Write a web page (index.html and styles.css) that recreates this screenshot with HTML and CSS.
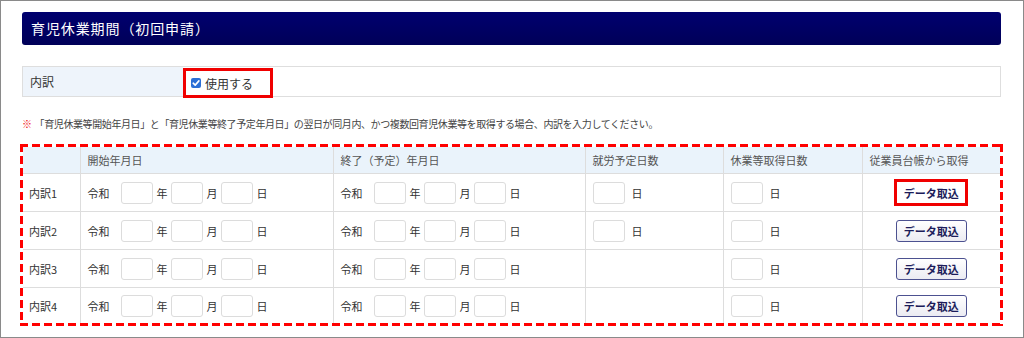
FILE: index.html
```html
<!DOCTYPE html>
<html lang="ja">
<head>
    <meta charset="UTF-8">
    <title>育児休業期間（初回申請）</title>
    <link rel="stylesheet" href="styles.css">
</head>
<body>
    <div class="frame">
        <div class="section-title">育児休業期間（初回申請）</div>

        <div class="use-row">
            <div class="use-label">内訳</div>
            <div class="use-value">
                <label class="use-mark">
                    <span class="check">
                        <svg width="10" height="10" viewBox="0 0 10 10"><path d="M2.2 5.2 L4.2 7.1 L7.9 2.9" fill="none" stroke="#fff" stroke-width="1.6" stroke-linecap="round" stroke-linejoin="round"/></svg>
                    </span>
                    使用する
                </label>
            </div>
        </div>

        <p class="note"><span class="note-mark">※</span>「育児休業等開始年月日」と「育児休業等終了予定年月日」の翌日が同月内、かつ複数回育児休業等を取得する場合、内訳を入力してください。</p>

        <div class="dashed">
            <table class="detail">
                <colgroup>
                    <col class="c-name">
                    <col class="c-date">
                    <col class="c-date2">
                    <col class="c-days">
                    <col class="c-days2">
                    <col class="c-btn">
                </colgroup>
                <thead>
                    <tr>
                        <th></th>
                        <th>開始年月日</th>
                        <th>終了（予定）年月日</th>
                        <th>就労予定日数</th>
                        <th>休業等取得日数</th>
                        <th>従業員台帳から取得</th>
                    </tr>
                </thead>
                <tbody>
                    <tr>
                        <td>内訳1</td>
                        <td><div class="date"><span class="era">令和</span><span class="box"></span><span class="unit">年</span><span class="box"></span><span class="unit">月</span><span class="box"></span><span class="unit">日</span></div></td>
                        <td><div class="date"><span class="era">令和</span><span class="box"></span><span class="unit">年</span><span class="box"></span><span class="unit">月</span><span class="box"></span><span class="unit">日</span></div></td>
                        <td><div class="days"><span class="box"></span><span class="unit">日</span></div></td>
                        <td><div class="days"><span class="box"></span><span class="unit">日</span></div></td>
                        <td class="btn-cell"><button class="fetch marked">データ取込</button></td>
                    </tr>
                    <tr>
                        <td>内訳2</td>
                        <td><div class="date"><span class="era">令和</span><span class="box"></span><span class="unit">年</span><span class="box"></span><span class="unit">月</span><span class="box"></span><span class="unit">日</span></div></td>
                        <td><div class="date"><span class="era">令和</span><span class="box"></span><span class="unit">年</span><span class="box"></span><span class="unit">月</span><span class="box"></span><span class="unit">日</span></div></td>
                        <td><div class="days"><span class="box"></span><span class="unit">日</span></div></td>
                        <td><div class="days"><span class="box"></span><span class="unit">日</span></div></td>
                        <td class="btn-cell"><button class="fetch">データ取込</button></td>
                    </tr>
                    <tr>
                        <td>内訳3</td>
                        <td><div class="date"><span class="era">令和</span><span class="box"></span><span class="unit">年</span><span class="box"></span><span class="unit">月</span><span class="box"></span><span class="unit">日</span></div></td>
                        <td><div class="date"><span class="era">令和</span><span class="box"></span><span class="unit">年</span><span class="box"></span><span class="unit">月</span><span class="box"></span><span class="unit">日</span></div></td>
                        <td></td>
                        <td><div class="days"><span class="box"></span><span class="unit">日</span></div></td>
                        <td class="btn-cell"><button class="fetch">データ取込</button></td>
                    </tr>
                    <tr class="last">
                        <td>内訳4</td>
                        <td><div class="date"><span class="era">令和</span><span class="box"></span><span class="unit">年</span><span class="box"></span><span class="unit">月</span><span class="box"></span><span class="unit">日</span></div></td>
                        <td><div class="date"><span class="era">令和</span><span class="box"></span><span class="unit">年</span><span class="box"></span><span class="unit">月</span><span class="box"></span><span class="unit">日</span></div></td>
                        <td></td>
                        <td><div class="days"><span class="box"></span><span class="unit">日</span></div></td>
                        <td class="btn-cell"><button class="fetch">データ取込</button></td>
                    </tr>
                </tbody>
            </table>
        </div>
    </div>
</body>
</html>
```

FILE: styles.css
```css
/* General */
body {
    margin: 0;
    font-family: "Noto Sans CJK JP", "Noto Sans", sans-serif;
    color: #333;
    background: #fff;
}

.frame {
    box-sizing: border-box;
    width: 1024px;
    height: 338px;
    border: 1px solid #8a8a8a;
    padding: 11px 22px 0 21px;
    overflow: hidden;
}

/* Section title bar */
.section-title {
    height: 33px;
    line-height: 33px;
    padding-left: 9px;
    border-radius: 3px;
    background: linear-gradient(#00006f, #000058);
    color: #fff;
    font-size: 14px;
    letter-spacing: 0.9px;
}

/* 内訳 use row */
.use-row {
    display: flex;
    height: 31px;
    margin-top: 21px;
    border: 1px solid #dedede;
    box-sizing: border-box;
}

.use-label {
    width: 160px;
    box-sizing: border-box;
    padding-left: 7px;
    background: #eef4fb;
    font-size: 12px;
    line-height: 29px;
}

.use-value {
    flex: 1;
    position: relative;
}

.use-mark {
    box-sizing: border-box;
    display: flex;
    align-items: center;
    width: 90px;
    height: 30px;
    margin-top: 1px;
    padding-left: 5px;
    border: 3px solid #f00000;
    font-size: 12px;
    gap: 4px;
}

.check {
    display: inline-flex;
    width: 10px;
    height: 10px;
    border-radius: 2px;
    background: #2b6fd6;
}

/* Note */
.note {
    margin: 19px 0 0;
    font-size: 10px;
    line-height: 16px;
    letter-spacing: -0.4px;
    color: #444;
}

.note-mark {
    color: #f01010;
    margin-right: 3px;
}

/* Dashed highlight around the table */
.dashed {
    margin: 12px -2px 0 -2px;
    padding: 3px;
    background:
        repeating-linear-gradient(90deg, #f00 0 8px, transparent 8px 12px) top left / 100% 3px no-repeat,
        repeating-linear-gradient(90deg, #f00 0 8px, transparent 8px 12px) bottom left / 100% 3px no-repeat,
        repeating-linear-gradient(180deg, #f00 0 8px, transparent 8px 12px) top left / 3px 100% no-repeat,
        repeating-linear-gradient(180deg, #f00 0 8px, transparent 8px 12px) top right / 3px 100% no-repeat;
}

.detail {
    width: 100%;
    border-collapse: collapse;
    table-layout: fixed;
    font-size: 11px;
}

.c-name { width: 57px; }
.c-date { width: 253px; }
.c-date2 { width: 252px; }
.c-days { width: 138px; }
.c-days2 { width: 139px; }

.detail th {
    height: 26px;
    padding: 0 0 0 7px;
    background: #eaf3fb;
    color: #555;
    font-weight: normal;
    text-align: left;
    border-left: 1px solid #dddddd;
    border-bottom: 1px solid #dddddd;
}

.detail td {
    height: 37px;
    padding: 0 0 0 7px;
    border-left: 1px solid #dddddd;
    border-bottom: 1px solid #dddddd;
}

.detail th:first-child,
.detail td:first-child {
    border-left: none;
    padding-left: 6px;
}

.detail tr.last td {
    height: 35px;
    border-bottom: none;
}

.date,
.days {
    display: flex;
    align-items: center;
}

.era {
    margin-right: 11px;
}

.box {
    box-sizing: border-box;
    width: 32px;
    height: 22px;
    border: 1px solid #dcdcdc;
    border-radius: 3px;
    background: #fff;
}

.date .unit {
    margin: 0 3px 0 4px;
}

.days .unit {
    margin-left: 7px;
}

.btn-cell {
    text-align: center;
}

.detail td.btn-cell {
    padding: 0;
}

.fetch {
    box-sizing: border-box;
    width: 71px;
    height: 22px;
    padding: 0;
    border: 1px solid #4c5190;
    border-radius: 3px;
    background: linear-gradient(#ffffff, #ebebf2);
    color: #1c1c5a;
    font-family: "Noto Sans CJK JP", sans-serif;
    font-size: 11px;
    font-weight: bold;
}

.fetch.marked {
    width: 74px;
    height: 27px;
    border: 3px solid #f00000;
    border-radius: 0;
    background: #fff;
}
```
